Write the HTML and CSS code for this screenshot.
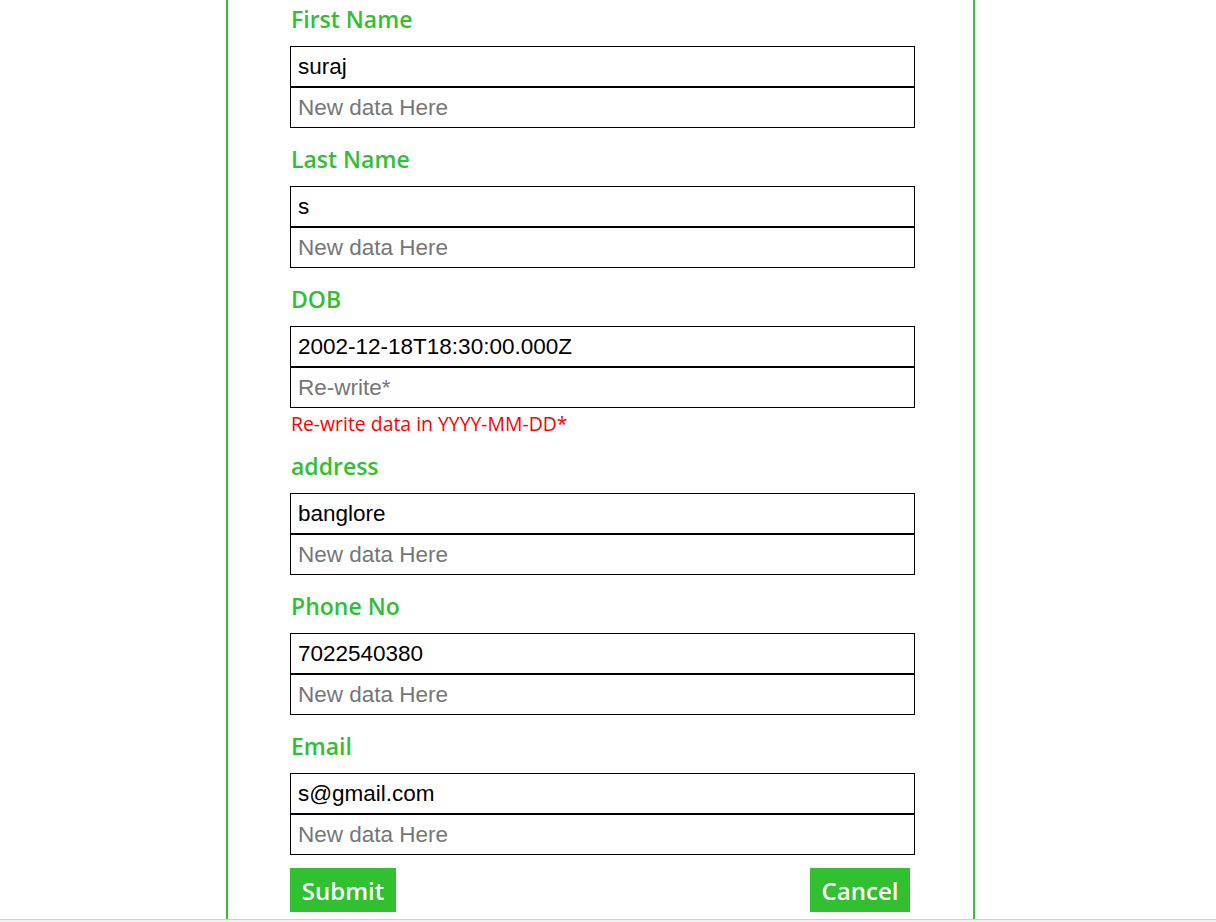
FILE: index.html
```html
<!DOCTYPE html>
<html>
<head>
<meta charset="utf-8">
<link rel="stylesheet" href="styles.css">
</head>
<body>
<div class="page">
  <form class="card">
    <div class="field">
      <label class="label">First Name</label>
      <div class="inputs">
        <input class="inp" type="text" value="suraj">
        <input class="inp" type="text" placeholder="New data Here">
      </div>
    </div>
    <div class="field">
      <label class="label">Last Name</label>
      <div class="inputs">
        <input class="inp" type="text" value="s">
        <input class="inp" type="text" placeholder="New data Here">
      </div>
    </div>
    <div class="field">
      <label class="label">DOB</label>
      <div class="inputs">
        <input class="inp" type="text" value="2002-12-18T18:30:00.000Z">
        <input class="inp" type="text" placeholder="Re-write*">
      </div>
      <p class="error">Re-write data in YYYY-MM-DD*</p>
    </div>
    <div class="field">
      <label class="label">address</label>
      <div class="inputs">
        <input class="inp" type="text" value="banglore">
        <input class="inp" type="text" placeholder="New data Here">
      </div>
    </div>
    <div class="field">
      <label class="label">Phone No</label>
      <div class="inputs">
        <input class="inp" type="text" value="7022540380">
        <input class="inp" type="text" placeholder="New data Here">
      </div>
    </div>
    <div class="field">
      <label class="label">Email</label>
      <div class="inputs">
        <input class="inp" type="text" value="s@gmail.com">
        <input class="inp" type="text" placeholder="New data Here">
      </div>
    </div>
    <div class="actions">
      <button type="button" class="btn btn-submit">Submit</button>
      <button type="button" class="btn btn-cancel">Cancel</button>
    </div>
  </form>
</div>
<div class="hbar"></div>
</body>
</html>
```
FILE: styles.css
```css
html, body {
  margin: 0;
  padding: 0;
  height: 922px;
  overflow: hidden;
  background: #fff;
}
.page {
  height: 919px;
  overflow: hidden;
}
.card {
  box-sizing: border-box;
  margin-left: 226px;
  width: 749px;
  height: 919px;
  border-left: 2px solid #33c033;
  border-right: 2px solid #33c033;
  padding: 4px 0 0 62px;
  display: flex;
  flex-direction: column;
  gap: 16px;
}
.field {
  display: flex;
  flex-direction: column;
}
.label {
  font-family: "Open Sans", "Noto Sans", sans-serif;
  font-weight: 600;
  font-size: 23px;
  line-height: 30px;
  height: 30px;
  color: #33bf33;
  margin: 0 0 12px 1px;
}
.inputs {
  display: flex;
  flex-direction: column;
}
.inp {
  box-sizing: border-box;
  width: 625px;
  height: 41px;
  margin: 0;
  border: 1px solid #000;
  border-radius: 0;
  padding: 0 7px;
  font-family: "Liberation Sans", Arial, sans-serif;
  font-size: 22.5px;
  color: #000;
  outline: none;
  background: #fff;
}
.inp::placeholder {
  color: #767676;
}
.error {
  margin: 5px 0 0 1px;
  font-family: "Open Sans", "Noto Sans", sans-serif;
  font-size: 19.4px;
  line-height: 22px;
  color: #ff0000;
}
.actions {
  margin-top: -3px;
  width: 620px;
  display: flex;
  justify-content: space-between;
}
.btn {
  height: 44px;
  border: none;
  border-radius: 0;
  background: #30c030;
  color: #fff;
  font-family: "Open Sans", "Noto Sans", sans-serif;
  font-weight: 600;
  font-size: 24px;
  padding: 0;
  cursor: pointer;
}
.btn-submit { width: 106px; }
.btn-cancel { width: 100px; }
.hbar {
  height: 3px;
  border-top: 1px solid #cfcfcf;
  background: #f0f0f0;
}
```
